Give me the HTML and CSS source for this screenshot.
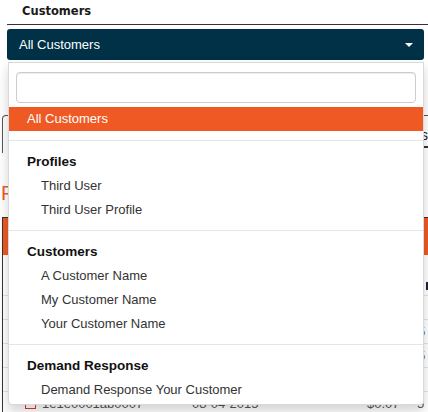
FILE: index.html
```html
<!DOCTYPE html>
<html lang="en">
<head>
<meta charset="utf-8">
<title>Customers filter</title>
<link rel="stylesheet" href="styles.css">
</head>
<body>
<div class="page">
  <div class="filter">
    <div class="filter-label">Customers</div>
    <div class="select">
      <button class="select-btn" type="button"><span>All Customers</span><span class="caret"></span></button>
      <div class="menu">
        <div class="searchbox"><input class="search" type="text" aria-label="Search"></div>
        <ul class="options">
          <li class="opt active">All Customers</li>
          <li class="divider"></li>
          <li class="group-header">Profiles</li>
          <li class="opt sub">Third User</li>
          <li class="opt sub">Third User Profile</li>
          <li class="divider"></li>
          <li class="group-header">Customers</li>
          <li class="opt sub">A Customer Name</li>
          <li class="opt sub">My Customer Name</li>
          <li class="opt sub">Your Customer Name</li>
          <li class="divider"></li>
          <li class="group-header">Demand Response</li>
          <li class="opt sub">Demand Response Your Customer</li>
        </ul>
      </div>
    </div>
  </div>

  <div class="tabs"><span class="tab tab-active">s</span></div>
  <h2 class="title">F</h2>
  <div class="table">
    <div class="thead"></div>
    <div class="row row-first"><span class="chk dark"></span></div>
    <div class="row"><span class="cell end"></span></div>
    <div class="row"><span class="cell end">5</span></div>
    <div class="row"><span class="cell end">5</span></div>
    <div class="row"><span class="cell end"></span></div>
    <div class="row row-last"><span class="chk red"></span><span class="cell id">1e1e0001ab0007</span><span class="cell date">08-04-2015</span><span class="cell val">$0.07</span><span class="cell end">5</span></div>
  </div>
</div>
</body>
</html>
```
FILE: styles.css
```css
* { box-sizing: border-box; }
html, body { margin: 0; padding: 0; }
body {
  width: 428px;
  height: 412px;
  overflow: hidden;
  background: #fff;
  color: #333;
  font-family: "Liberation Sans", Arial, sans-serif;
  font-size: 13px;
}
.page { position: relative; }

/* filter block */
.filter { margin-left: 7px; position: relative; z-index: 5; }
.filter-label {
  font-family: "DejaVu Sans", Verdana, sans-serif;
  font-weight: bold;
  font-size: 11.5px;
  line-height: 18px;
  padding: 2px 0 4px 15px;
  border-bottom: 1px solid #333;
  color: #1a1a1a;
}
.select { position: relative; margin: 4px 4px 0 0; }
.select-btn {
  display: flex;
  align-items: center;
  justify-content: space-between;
  width: 100%;
  height: 31px;
  padding: 0 11px 0 12px;
  margin: 0;
  background: #013146;
  color: #fff;
  border: none;
  border-radius: 3px;
  font: 13px "Liberation Sans", Arial, sans-serif;
}
.caret {
  width: 0; height: 0;
  border-top: 4px solid #fff;
  border-left: 4px solid transparent;
  border-right: 4px solid transparent;
}
.menu {
  position: absolute;
  left: 1px;
  right: 0;
  top: calc(100% + 2px);
  background: #fff;
  border: 1px solid rgba(0,0,0,.15);
  border-radius: 0 0 4px 4px;
  box-shadow: 0 6px 12px rgba(0,0,0,.175);
  padding: 5px 0 2px;
}
.searchbox { padding: 4px 7px; }
.search {
  display: block;
  width: 100%;
  height: 31px;
  margin: 0;
  border: 1px solid #ccc;
  border-radius: 4px;
  box-shadow: inset 0 1px 1px rgba(0,0,0,.075);
  background: #fff;
}
.options { list-style: none; margin: 0; padding: 0; }
.opt {
  padding: 3px 18px;
  line-height: 18px;
  white-space: nowrap;
  color: #333;
}
.opt.sub { padding-left: 32px; }
.opt.active { background: #ef5a24; color: #fff; }
.group-header {
  padding: 3px 18px;
  line-height: 18px;
  font-weight: bold;
  font-size: 13.5px;
  color: #111;
}
.divider { height: 1px; margin: 9px 0; background: #e5e5e5; }
.divider:nth-child(6) { margin-top: 8px; }
.divider:nth-child(11) { margin-top: 8px; }

/* background page content */
.tabs {
  display: flex;
  justify-content: flex-end;
  align-items: center;
  margin: 55px 0 0 2px;
  width: 440px;
  height: 38px;
  border: 1px solid #555;
  border-bottom: none;
  border-radius: 4px 4px 0 0;
  padding-right: 10px;
  font-size: 14px;
  color: #222;
}
.tab-active { border-bottom: 2px solid #333; padding: 6px 3px 3px; }
.title {
  margin: 28px 0 0 1px;
  font-size: 20px;
  line-height: 24px;
  font-weight: normal;
  color: #ef5a24;
}
.table {
  margin: 12px 0 0 2px;
  width: 440px;
  border-left: 1px solid #333;
  border-top: 1px solid #333;
}
.thead { height: 37px; background: #ef5a24; }
.row {
  display: flex;
  align-items: center;
  justify-content: flex-end;
  height: 24px;
  border-bottom: 1px solid #e3e3e3;
  padding-right: 4px;
  color: #555;
}
.row-first { height: 41px; align-items: flex-start; padding: 27px 8px 0 0; }
.row-last { justify-content: flex-start; padding-left: 22px; }
.chk {
  width: 11px; height: 11px;
  border: 1px solid #999;
  flex: none;
}
.chk.dark { border: 2px solid #223; background: #eef; width: 8px; height: 8px; }
.chk.red { border-color: #d33; }
.cell { flex: none; }
.id { width: 150px; margin-left: 6px; }
.date { width: 175px; }
.val { width: 50px; }
.end { width: 20px; }
```
